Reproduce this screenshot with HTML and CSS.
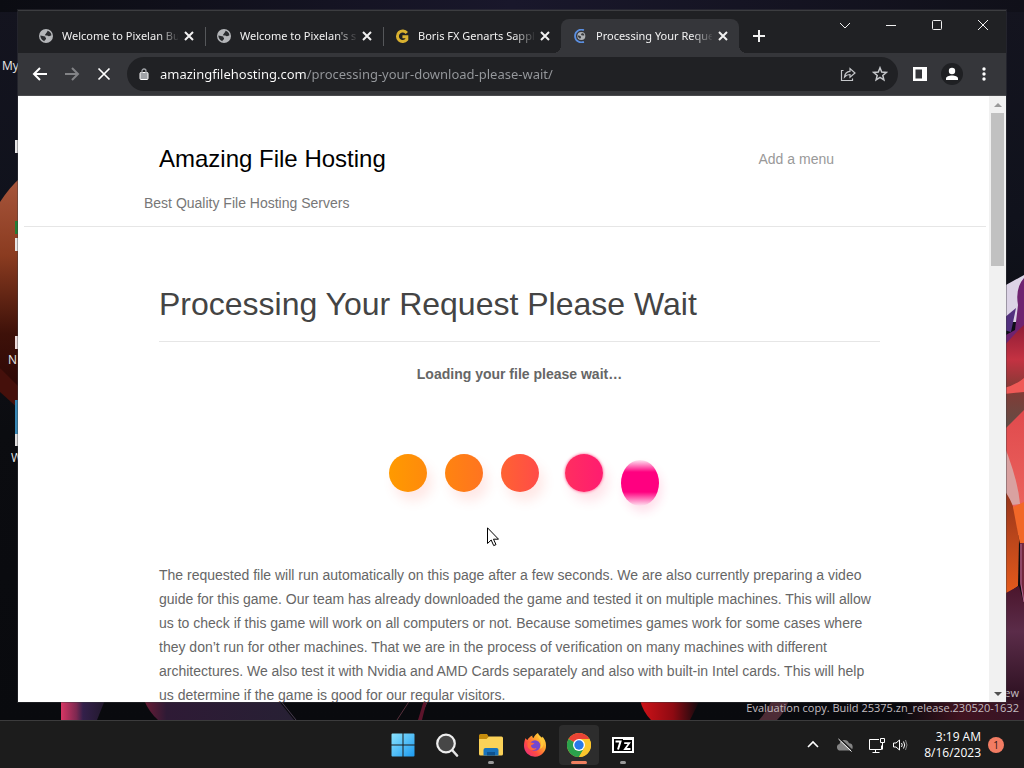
FILE: index.html
```html
<!DOCTYPE html>
<html lang="en">
<head>
<meta charset="utf-8">
<title>Processing Your Request Please Wait</title>
<link rel="stylesheet" href="styles.css">
</head>
<body>
<main class="desktop">
  <svg class="wallpaper" viewBox="0 0 1024 720" preserveAspectRatio="none" aria-hidden="true">
    <defs>
      <linearGradient id="sky" x1="0" y1="0" x2="0" y2="1"><stop offset="0" stop-color="#14141f"/><stop offset=".3" stop-color="#10121c"/><stop offset=".6" stop-color="#0b0c10"/><stop offset="1" stop-color="#090a0e"/></linearGradient>
      <linearGradient id="top" x1="0" x2="1"><stop offset="0" stop-color="#0b0c12"/><stop offset=".5" stop-color="#19172b"/><stop offset="1" stop-color="#101019"/></linearGradient>
      <linearGradient id="petal" x1="0" y1="0" x2="0" y2="1"><stop offset="0" stop-color="#a8563c"/><stop offset=".35" stop-color="#8a3b20"/><stop offset=".7" stop-color="#3e1109"/><stop offset="1" stop-color="#290606"/></linearGradient>
      <linearGradient id="pink" x1="0" x2="1"><stop offset="0" stop-color="#d83664"/><stop offset=".35" stop-color="#7c2850"/><stop offset=".5" stop-color="#33204a"/><stop offset="1" stop-color="#21182c"/></linearGradient>
      <linearGradient id="plum" x1="0" x2="1"><stop offset="0" stop-color="#6b1c35"/><stop offset=".15" stop-color="#2e1a35"/><stop offset="1" stop-color="#272034"/></linearGradient>
      <linearGradient id="ruby" x1="0" x2="1"><stop offset="0" stop-color="#d01218"/><stop offset=".55" stop-color="#8e0a12"/><stop offset="1" stop-color="#0b0a0e"/></linearGradient>
      <linearGradient id="red" x1="0" y1="0" x2="0" y2="1"><stop offset="0" stop-color="#8e1c36"/><stop offset=".3" stop-color="#c43242"/><stop offset=".55" stop-color="#843a35"/><stop offset="1" stop-color="#57524a"/></linearGradient>
      <linearGradient id="coral" x1="0" y1="0" x2="0" y2="1"><stop offset="0" stop-color="#e04a4d"/><stop offset="1" stop-color="#ee6a62"/></linearGradient>
      <linearGradient id="orange" x1="0" y1="0" x2="0" y2="1"><stop offset="0" stop-color="#96341a"/><stop offset="1" stop-color="#e65b1c"/></linearGradient>
      <linearGradient id="dusk" x1="0" y1="0" x2="0" y2="1"><stop offset="0" stop-color="#4b152c"/><stop offset=".4" stop-color="#5b2c49"/><stop offset="1" stop-color="#2c1020"/></linearGradient>
      <linearGradient id="floor" x1="0" x2="1"><stop offset="0" stop-color="#090a0e"/><stop offset=".5" stop-color="#421320"/><stop offset="1" stop-color="#351426"/></linearGradient>
    </defs>
    <rect width="1024" height="720" fill="url(#sky)"/>
    <rect width="1024" height="12" fill="url(#top)"/>
    <path d="M0 202Q9 188 20 178V400L0 368Z" fill="url(#petal)"/>
    <path d="M0 368 20 388V410L0 392Z" fill="#45100b"/>
    <path d="M61 700H105L97 720H61Z" fill="url(#pink)"/>
    <path d="M144 700H278L294 720H158Q149 712 144 700Z" fill="url(#plum)"/>
    <path d="M280 700 296 720" stroke="#4a3c50" fill="none"/>
    <path d="M410 700 397 720M428 700 419 720" stroke="#59313d" fill="none"/>
    <path d="M424 700h3l-5 20h-4z" fill="#5c142b"/>
    <path d="M640 700H700L690 720H651Q643 712 640 700Z" fill="url(#ruby)"/>
    <path d="M772 700h17q-4 12-12 20h-18q9-10 13-20z" fill="#4d2c36"/>
    <path d="M900 700H1024V720H900Z" fill="url(#floor)"/>
    <path d="M1004 286 1024 275V322H1004Z" fill="#dcd3e6"/>
    <path d="M1024 278Q1015 288 1018 305L1015 330 1004 336V360H1024Z" fill="#6e2370"/>
    <path d="M1004 318 1016 308 1011 332 1004 330Z" fill="#52307e"/>
    <path d="M1004 346Q1018 330 1024 325V440H1004Z" fill="url(#red)"/>
    <path d="M1004 388Q1016 385 1024 378V392L1004 394Z" fill="#ef5956"/>
    <path d="M1004 430 1024 410V535H1004Z" fill="url(#coral)"/>
    <path d="M1004 445Q1018 480 1020 504L1012 505 1004 490Z" fill="#d9a1a0"/>
    <path d="M1004 490Q1018 508 1019 540L1018 586 1004 596Z" fill="url(#orange)"/>
    <path d="M1013 507 1024 502V545L1020 544Z" fill="#f26828"/>
    <path d="M1020 543H1024V606L1020 582Z" fill="#73283c"/>
    <path d="M1004 594 1019 586 1024 604V700H1004Z" fill="url(#dusk)"/>
    <path d="M1021 544v40l3 18" stroke="#ad6790" fill="none"/>
  </svg>
  <span class="shortcut s1">My</span>
  <span class="shortcut s2"></span>
  <span class="shortcut s3"></span>
  <span class="shortcut s4">N</span>
  <span class="shortcut s5">W</span>
  <p class="watermark">ew<br>Evaluation copy. Build 25375.zn_release.230520-1632</p>

  <section class="window" aria-label="Browser">
    <header class="tabstrip">
      <div class="tab">
        <svg class="favicon" viewBox="0 0 16 16" aria-hidden="true"><circle cx="8" cy="8" r="8" fill="#b4b6b9"/><path d="M1.500 7.500C4 7.500 5 8.500 7 8.500c0 1.500 1.500 1.500 1 3-.5 1-1.500 1-2 2.500C3.500 13 1.500 10.500 1.500 7.500zM9.500 2c.5 1.500-1 2-1.500 3S6.500 6 7 7c1 .8 2 0 3 .8s2.500.2 4.200-.8C14 4.500 12 2.500 9.500 2z" fill="#2b2d30"/></svg>
        <span class="tab-title">Welcome to Pixelan Bundle</span>
        <button class="tab-close" aria-label="Close tab"><svg viewBox="0 0 16 16"><path d="M4 4l8 8M12 4l-8 8"/></svg></button>
      </div>
      <div class="tab divided">
        <svg class="favicon" viewBox="0 0 16 16" aria-hidden="true"><circle cx="8" cy="8" r="8" fill="#b4b6b9"/><path d="M1.500 7.500C4 7.500 5 8.500 7 8.500c0 1.500 1.500 1.500 1 3-.5 1-1.500 1-2 2.500C3.500 13 1.500 10.500 1.500 7.500zM9.500 2c.5 1.500-1 2-1.500 3S6.500 6 7 7c1 .8 2 0 3 .8s2.500.2 4.200-.8C14 4.500 12 2.500 9.500 2z" fill="#2b2d30"/></svg>
        <span class="tab-title">Welcome to Pixelan's site</span>
        <button class="tab-close" aria-label="Close tab"><svg viewBox="0 0 16 16"><path d="M4 4l8 8M12 4l-8 8"/></svg></button>
      </div>
      <div class="tab divided">
        <svg class="favicon" viewBox="0 0 16 16" aria-hidden="true"><path d="M13.500 4.600A6 6 0 1 0 13.500 12V8.800H8.500" fill="none" stroke="#d9b130" stroke-width="3.400"/></svg>
        <span class="tab-title">Boris FX Genarts Sapphire</span>
        <button class="tab-close" aria-label="Close tab"><svg viewBox="0 0 16 16"><path d="M4 4l8 8M12 4l-8 8"/></svg></button>
      </div>
      <div class="tab active">
        <svg class="favicon" viewBox="0 0 16 16" aria-hidden="true"><path d="M12.500 1.300A7.300 7.300 0 1 0 12.500 14.700" fill="none" stroke="#5b8fe0" stroke-width="2"/><circle cx="9.500" cy="8" r="4.600" fill="#aeb1b5"/><path d="M5.500 7.500C7 7.500 8 8 9 8.500c.5 1 0 2-1 2.500-1.500-.5-2.500-2-2.500-3.500zM10 4.500C10 6 9 6 9 6.800c1 .7 3 .7 4 .2-.3-1.500-1.500-2.500-3-2.500z" fill="#3a3c3f"/></svg>
        <span class="tab-title">Processing Your Request Please</span>
        <button class="tab-close" aria-label="Close tab"><svg viewBox="0 0 16 16"><path d="M4 4l8 8M12 4l-8 8"/></svg></button>
      </div>
      <button class="new-tab" aria-label="New tab"><svg viewBox="0 0 16 16"><path d="M8 2v12M2 8h12"/></svg></button>
      <div class="controls">
        <button aria-label="Search tabs"><svg viewBox="0 0 16 16"><path d="M3 6l5 5 5-5"/></svg></button>
        <button aria-label="Minimize"><svg viewBox="0 0 16 16"><path d="M3 8.500h10"/></svg></button>
        <button aria-label="Maximize"><svg viewBox="0 0 16 16"><rect x="3.500" y="3.500" width="9" height="9" rx="1"/></svg></button>
        <button aria-label="Close"><svg viewBox="0 0 16 16"><path d="M3 3l10 10M13 3 3 13"/></svg></button>
      </div>
    </header>

    <nav class="toolbar">
      <button class="tool" aria-label="Back"><svg viewBox="0 0 16 16"><path d="M15 8H2M8 2 2 8l6 6" stroke-width="2"/></svg></button>
      <button class="tool dim" aria-label="Forward"><svg viewBox="0 0 16 16"><path d="M1 8h13M8 2l6 6-6 6" stroke-width="2"/></svg></button>
      <button class="tool" aria-label="Stop"><svg viewBox="0 0 16 16"><path d="M2.500 2.500l11 11M13.500 2.500l-11 11" stroke-width="1.700"/></svg></button>
      <div class="omnibox">
        <svg class="lock" viewBox="0 0 10 12" aria-hidden="true"><rect x="1" y="4.500" width="8" height="7" rx="1" fill="#a0a3a7"/><path d="M3 5V3a2 2 0 0 1 4 0v2" fill="none" stroke="#a0a3a7" stroke-width="1.300"/></svg>
        <input class="address" type="text" aria-label="Address" value="amazingfilehosting.com/processing-your-download-please-wait/">
        <button class="tool soft" aria-label="Share"><svg viewBox="0 0 16 16"><path d="M3.500 4.500H1.500v10h11v-2M4.500 11c.4-3.500 2-5.500 5.500-5.700V2.500L15 7l-5 4.300V8.500c-2.500 0-4 .8-5.500 2.500z" stroke-width="1.200"/></svg></button>
        <button class="tool soft" aria-label="Bookmark"><svg viewBox="0 0 16 16"><path d="M8 1.800l1.700 4.300 4.600.3-3.500 3 1.100 4.500L8 11.400l-3.900 2.500 1.100-4.500-3.500-3 4.600-.3z" stroke-width="1.500"/></svg></button>
      </div>
      <button class="tool" aria-label="Side panel"><svg viewBox="0 0 16 16"><path d="M1 1h14v14H1zM3.500 3.500v9H10v-9z" fill="#fff" fill-rule="evenodd" stroke="none"/></svg></button>
      <button class="tool" aria-label="Profile"><svg class="avatar" viewBox="0 0 22 22"><circle cx="11" cy="11" r="11" fill="#1f2023" stroke="none"/><circle cx="11" cy="8" r="3.200" fill="#fff" stroke="none"/><path d="M5 17v-1.500c0-2 3-3 6-3s6 1 6 3V17z" fill="#fff" stroke="none"/></svg></button>
      <button class="tool" aria-label="Menu"><svg viewBox="0 0 16 16"><g fill="#fff" stroke="none"><circle cx="8" cy="3" r="1.700"/><circle cx="8" cy="8" r="1.700"/><circle cx="8" cy="13" r="1.700"/></g></svg></button>
    </nav>

    <div class="viewport">
      <div class="page">
        <div class="site-header">
          <div class="brand-row"><a class="brand" href="#">Amazing File Hosting</a><a class="menu-link" href="#">Add a menu</a></div>
          <p class="tagline">Best Quality File Hosting Servers</p>
        </div>
        <article class="post">
          <h1>Processing Your Request Please Wait</h1>
          <p class="loading">Loading your file please wait…</p>
          <div class="dots" role="img" aria-label="Loading">
            <i class="dot d1"></i><i class="dot d2"></i><i class="dot d3"></i><i class="dot d4"></i><i class="dot d5"></i>
          </div>
          <p class="copy">The requested file will run automatically on this page after a few seconds. We are also currently preparing a video guide for this game. Our team has already downloaded the game and tested it on multiple machines. This will allow us to check if this game will work on all computers or not. Because sometimes games work for some cases where they don’t run for other machines. That we are in the process of verification on many machines with different architectures. We also test it with Nvidia and AMD Cards separately and also with built-in Intel cards. This will help us determine if the game is good for our regular visitors.</p>
        </article>
      </div>
      <div class="scrollbar">
        <button aria-label="Scroll up"><svg viewBox="0 0 8 8"><path d="M0 6l4-4 4 4z" fill="#9a9a9a"/></svg></button>
        <div class="track"><div class="thumb"></div></div>
        <button aria-label="Scroll down"><svg viewBox="0 0 8 8"><path d="M0 2l4 4 4-4z" fill="#505050"/></svg></button>
      </div>
    </div>
  </section>

  <svg class="cursor" viewBox="0 0 12 20" aria-hidden="true"><path d="M.5.800v15.700l3.700-3.500 2.500 5.600 2.300-1-2.500-5.400h5z" fill="#fff" stroke="#000"/></svg>
</main>

<footer class="taskbar">
  <div class="apps">
    <button class="app" aria-label="Start"><svg viewBox="0 0 24 24"><defs><linearGradient id="win" x1="0" y1="0" x2="1" y2="1"><stop offset="0" stop-color="#8be3fd"/><stop offset="1" stop-color="#1c9af0"/></linearGradient></defs><path d="M.5 1.500a1 1 0 0 1 1-1h10v11H.5zM12.500.5h10a1 1 0 0 1 1 1v10h-11zM.5 12.500h11v11h-10a1 1 0 0 1-1-1zM12.500 12.500h11v10a1 1 0 0 1-1 1h-10z" fill="url(#win)"/></svg></button>
    <button class="app" aria-label="Search"><svg viewBox="0 0 24 24"><path d="M17.500 17.500 22 22.500" stroke="#e4e4e4" stroke-width="2.600" stroke-linecap="round"/><circle cx="11" cy="10.500" r="8.800" fill="#474747" stroke="#ededed" stroke-width="2.200"/></svg></button>
    <button class="app running" aria-label="File Explorer"><svg viewBox="0 0 24 24"><path d="M0 2.500A1.500 1.500 0 0 1 1.500 1H8l2 3v4H0z" fill="#c58c0c"/><path d="M0 6h7.500L10 3.500h12.500A1.500 1.500 0 0 1 24 5v16a1.500 1.500 0 0 1-1.500 1.500h-21A1.500 1.500 0 0 1 0 21z" fill="#fbd258"/><path d="M4.500 22.500V17A2 2 0 0 1 6.500 15h11a2 2 0 0 1 2 2v5.500z" fill="#1873bd"/><path d="M8 19h8v3.500H8z" fill="#0e528e"/></svg></button>
    <button class="app" aria-label="Firefox"><svg viewBox="0 0 24 24"><defs><linearGradient id="fx" x1="1" y1="0" x2="0" y2="1"><stop offset="0" stop-color="#fff14a"/><stop offset=".35" stop-color="#ffa52c"/><stop offset=".65" stop-color="#ff4b42"/><stop offset="1" stop-color="#e3248f"/></linearGradient></defs><path d="M2.500 5c.5 1 1 1.500 2 2 1-2 2.500-3.500 5-4.500-.5 1 0 2 1 2.500 1-2 2-4 4.500-5 .5 2.500 2 3.500 4 5l.5-1.500c2 2.500 3.500 5 3.500 9A11 11 0 0 1 1 13c0-3 .5-5.500 1.500-8z" fill="url(#fx)"/><circle cx="12" cy="12.500" r="5.300" fill="#7448cf"/><path d="M4.500 9.500c3-1 5 .5 7 .5-1 2-3 1.500-3.500 2.800 0 2 3 3.500 5.500 2.200-1 3-7.500 3-9-1.500z" fill="#ff683b"/><path d="M15 1c-1 4 3 5 3 10 0 2-.5 4-1.500 5 5-1 5-8 2.500-11z" fill="#ffc73b"/></svg></button>
    <button class="app running selected" aria-label="Google Chrome"><svg viewBox="0 0 24 24"><circle cx="12" cy="12" r="12" fill="#fbc62d"/><path d="M12 12 1.600 6A12 12 0 0 1 22.400 6z" fill="#e94335"/><path d="M12 12 1.600 6A12 12 0 0 0 12 24l5.200-9z" fill="#2ba24c"/><path d="M12 6h10.400A12 12 0 0 1 12 24l5.200-9z" fill="#fbc62d"/><circle cx="12" cy="12" r="6" fill="#fff"/><circle cx="12" cy="12" r="4.700" fill="#2879e8"/></svg></button>
    <button class="app running" aria-label="7-Zip"><svg viewBox="0 0 24 24"><path d="M1 4h22v16H1z" fill="#fff"/><path d="M3 6h9v12H3z" fill="#000"/><path d="M4.500 8.500h5L7 16.500" fill="none" stroke="#fff" stroke-width="2"/><path d="M12 7h9v11h-9z" fill="#000"/><path d="M13.200 10.200h5L14 16h5.500" fill="none" stroke="#fff" stroke-width="1.800"/></svg></button>
  </div>
  <div class="tray">
    <button class="tray-btn" aria-label="Show hidden icons"><svg viewBox="0 0 16 16"><path d="M3 10l5-5 5 5" stroke-width="1.600"/></svg></button>
    <button class="tray-btn" aria-label="OneDrive"><svg viewBox="0 0 16 16"><path d="M3.500 13.500A3.300 3.300 0 0 1 2.500 7a5 5 0 0 1 9.500-.8 3.700 3.700 0 0 1 .8 7.300z" fill="#858585" stroke="none"/><path d="M2.500 1.500 15.500 13.500" stroke="#1c1c1c" stroke-width="1.500"/><path d="M1.500 2 14.500 14.500"/></svg></button>
    <button class="quick" aria-label="Network and volume">
      <svg viewBox="0 0 16 16"><path d="M10 2.500H.500v10H12.500V8.500M6.500 12.500v3M3.500 15.500h7"/><path d="M11.500 1.500h4v4h-4zM13.500 5.500v7" /></svg>
      <svg viewBox="0 0 16 16"><path d="M1.500 6v4h2.500l3.500 3V3L4 6zM9.500 6q1.500 2 0 4M11.500 4.500q2.500 3.500 0 7"/><path d="M13.500 3q3 5 0 10" stroke="#888"/></svg>
    </button>
    <button class="clock"><span>3:19 AM</span><span>8/16/2023</span></button>
    <button class="badge" aria-label="1 notification">1</button>
  </div>
</footer>
</body>
</html>
```
FILE: styles.css
```css
* { box-sizing: border-box; }
body {
  margin: 0;
  height: 100vh;
  display: flex;
  flex-direction: column;
  overflow: hidden;
  background: #0b0c10;
  font-family: "Open Sans", "Noto Sans", sans-serif;
  font-size: 12px;
}
button {
  border: 0;
  padding: 0;
  background: none;
  color: inherit;
  font: inherit;
  display: flex;
  align-items: center;
  justify-content: center;
}
p, h1 { margin: 0; }
a { text-decoration: none; }

.desktop { position: relative; flex: 1; min-height: 0; overflow: hidden; }
.wallpaper { position: absolute; inset: 0; width: 100%; height: 100%; }

.shortcut { position: absolute; color: #e8e8e8; line-height: 16px; }
.s1 { left: 2px; top: 58px; }
.s2, .s3 { left: 15px; width: 6px; height: 13px; background: #e8e6e6; }
.s2 { top: 140px; }
.s3 { top: 238px; box-shadow: 0 -17px 0 #247d35; }
.s4 { left: 8px; top: 352px; }
.s4::before, .s5::before { content: ""; position: absolute; left: 7px; top: -16px; width: 6px; height: 13px; background: #ecdcdc; }
.s5 { left: 11px; top: 450px; }
.s5::before { left: 4px; top: -50px; height: 48px; background: linear-gradient(#3787b5 34px, #e0dede 34px, #e0dede 46px, transparent 46px); }
.watermark { position: absolute; right: 5px; bottom: 5px; color: #c3bdc0; font-size: 11px; line-height: 15px; text-align: right; }

.window {
  position: absolute;
  inset: 10px 18px 18px;
  display: flex;
  flex-direction: column;
  background: #202124;
  border-top: 1px solid #3c3d40;
  box-shadow: 0 0 0 1px rgba(60, 60, 64, .4);
}

.tabstrip { display: flex; align-items: flex-end; height: 42px; padding-left: 9px; color: #f1f1f1; flex: none; }
.tab { position: relative; display: flex; align-items: center; flex: 0 1 178px; min-width: 0; height: 34px; padding: 0 8px 0 12px; }
.divided::before { content: ""; position: absolute; left: 0; top: 8px; width: 1px; height: 19px; background: #55575a; }
.active { background: #35363a; border-radius: 8px 8px 0 0; }
.active::before, .active::after { content: ""; position: absolute; bottom: 0; width: 8px; height: 8px; }
.active::before { left: -8px; background: radial-gradient(circle at 0 0, transparent 8px, #35363a 8px); }
.active::after { right: -8px; background: radial-gradient(circle at 100% 0, transparent 8px, #35363a 8px); }
.favicon { width: 14px; height: 14px; flex: none; margin-right: 9px; }
.tab-title {
  flex: 1;
  min-width: 0;
  overflow: hidden;
  white-space: nowrap;
  font-family: "Noto Sans", "Open Sans", sans-serif;
  font-size: 11px;
  line-height: 18px;
  margin-right: 3px;
  -webkit-mask-image: linear-gradient(to right, #000 96px, transparent 118px);
  mask-image: linear-gradient(to right, #000 96px, transparent 118px);
}
.tab-close svg { display: block; width: 16px; height: 16px; }
.tabstrip svg, .toolbar svg { fill: none; stroke: currentColor; }
.tabstrip .favicon { stroke: none; }
.tab-close svg { stroke-width: 2; }
.new-tab { width: 28px; height: 34px; margin-left: 6px; flex: none; }
.new-tab svg { width: 16px; height: 16px; stroke-width: 2; }
.controls { display: flex; align-self: flex-start; margin-left: auto; }
.controls button { width: 46px; height: 28px; }
.controls svg { width: 16px; height: 16px; }

.toolbar { display: flex; align-items: center; flex: none; height: 43px; padding: 0 6px; background: #35363a; border-bottom: 1px solid #4a4b4e; color: #fff; }
.tool { width: 32px; height: 32px; flex: none; }
.tool svg { width: 16px; height: 16px; }
.tool .avatar { width: 22px; height: 22px; }
.dim { color: #828386; }
.soft { color: #c5c7ca; }
.omnibox { display: flex; align-items: center; flex: 1; min-width: 0; height: 34px; margin: 0 6px 0 7px; padding: 0 2px 0 12px; background: #202124; border-radius: 17px; }
.lock { width: 10px; height: 12px; flex: none; margin-right: 11px; }
.address {
  flex: 1;
  min-width: 0;
  border: 0;
  padding: 0;
  outline: 0;
  height: 24px;
  font: 13px "Noto Sans", "Open Sans", sans-serif;
  color: transparent;
  background: linear-gradient(to right, #fff 147px, #96999d 147px);
  -webkit-background-clip: text;
  background-clip: text;
}

.viewport { display: flex; flex: 1; min-height: 0; background: #fff; }
.page { flex: 1; min-width: 0; overflow: hidden; font-family: "Liberation Sans", Arial, sans-serif; font-size: 14px; color: #666; }
.site-header { margin: 0 3px 0 6px; padding: 47px 0 11px 120px; border-bottom: 1px solid #e6e6e6; }
.brand-row { display: flex; align-items: center; justify-content: space-between; max-width: 690px; padding-left: 15px; height: 32px; }
.brand { font-size: 24px; color: #000; }
.menu-link { color: #999; }
.tagline { margin-top: 16px; line-height: 24px; color: #777; }
.post { max-width: 862px; padding: 55px 0 0 141px; }
h1 { font-size: 32px; line-height: 44px; font-weight: 400; color: #444; padding-bottom: 15px; border-bottom: 1px solid #e6e6e6; }
.loading { margin-top: 20px; line-height: 24px; text-align: center; font-weight: 700; }
.dots { display: flex; justify-content: center; gap: 18px; padding: 68px 0 71px 8px; }
.dot { width: 38px; height: 38px; border-radius: 50%; box-shadow: 5px 9px 12px rgba(255, 90, 80, .14); }
.d1 { background: linear-gradient(to right, #ff9a00, #ff8a0c); }
.d2 { background: linear-gradient(to right, #ff8410, #ff7420); }
.d3 { background: linear-gradient(to right, #ff6232, #ff4c48); }
.d4 { margin-left: 8px; background: linear-gradient(to right, #ff2e60, #ff1c70); box-shadow: 0 0 3px #ff5088, 5px 9px 12px rgba(255, 60, 100, .14); }
.d5 { height: 46px; margin: 6px 0 -14px; background: linear-gradient(rgba(255, 0, 128, .1), #ff0080 12px, #ff0080 32px, rgba(255, 0, 128, .1)); box-shadow: 3px 6px 10px rgba(255, 40, 120, .14); }
.copy { line-height: 24px; }

.scrollbar { display: flex; flex-direction: column; flex: none; width: 17px; background: #f1f1f1; }
.scrollbar button { height: 17px; }
.scrollbar svg { width: 8px; height: 8px; }
.track { flex: 1; padding: 0 2px; }
.thumb { height: 26.7%; background: #c1c1c1; }
.cursor { position: absolute; left: 487px; top: 527px; width: 12px; height: 20px; }

.taskbar { display: grid; grid-template-columns: 1fr auto 1fr; flex: none; height: 48px; background: #1c1c1c; border-top: 1px solid #3b3b3c; color: #fff; }
.apps { grid-column: 2; display: flex; align-items: center; padding-left: 2px; }
.app { position: relative; width: 40px; height: 40px; margin: 0 2px; border-radius: 4px; }
.app svg { width: 24px; height: 24px; }
.selected { background: #2d2d2d; }
.running::after { content: ""; position: absolute; left: 17px; bottom: 1px; width: 6px; height: 3px; border-radius: 2px; background: #9a9a9a; }
.selected::after { left: 12px; width: 16px; background: #f08060; }
.tray { display: flex; align-items: center; justify-content: flex-end; padding-right: 20px; }
.tray svg { width: 16px; height: 16px; fill: none; stroke: #fff; }
.tray-btn { width: 32px; height: 40px; }
.quick { gap: 7px; height: 40px; padding: 0 8px; }
.clock { flex-direction: column; align-items: flex-end; width: 65px; line-height: 16px; }
.badge { width: 16px; height: 16px; margin-left: 7px; border-radius: 50%; background: #f27c63; color: #2b1512; font-size: 10px; }
```
